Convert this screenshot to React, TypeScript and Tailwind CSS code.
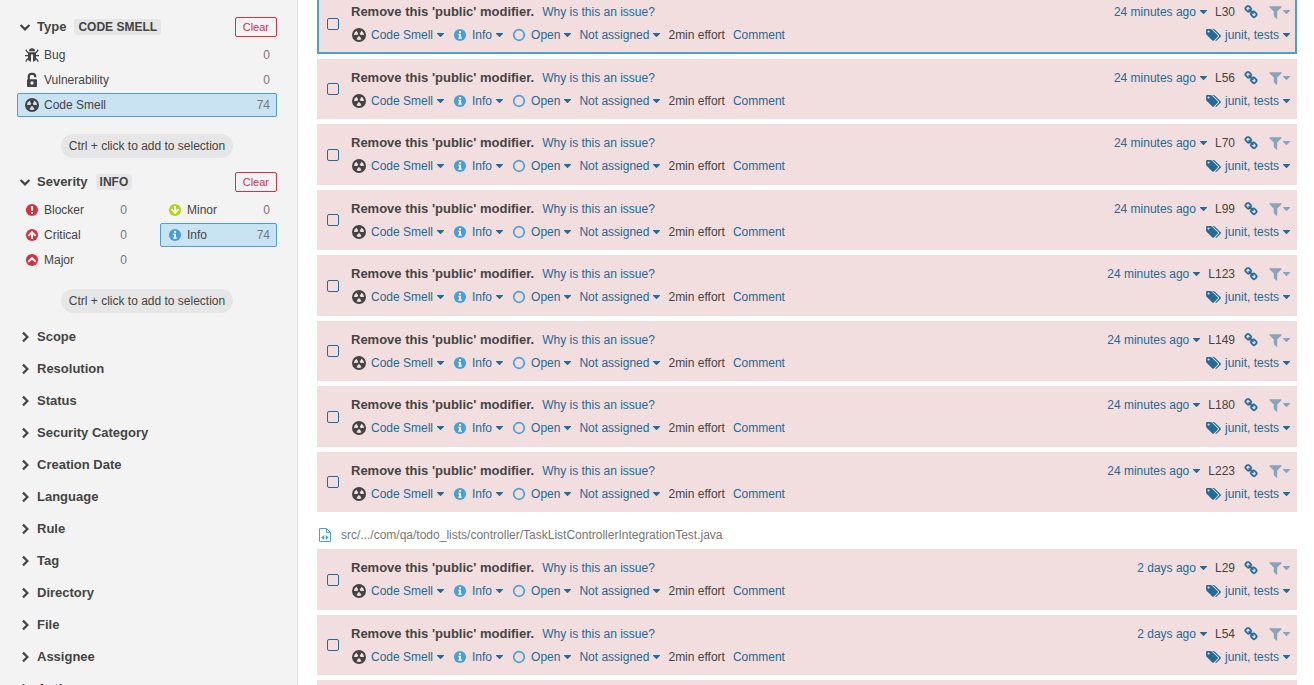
import React from "react";

type IconProps = { className?: string };

function CaretDown({ className = "" }: IconProps) {
  return (
    <svg viewBox="0 0 7 4" className={`h-1 w-[7px] shrink-0 ${className}`} fill="currentColor" aria-hidden="true">
      <path d="M.2 0h6.600c.2 0 .3.500.1.800L4 3.800a.7.700 0 0 1-1 0L.1.800C-.1.500 0 0 .2 0z" />
    </svg>
  );
}

function Chevron({ open }: { open: boolean }) {
  return (
    <svg viewBox="0 0 16 16" className="size-4 shrink-0" fill="none" stroke="#444" strokeWidth="2.2" aria-hidden="true">
      <path d={open ? "M3.6 6l4.4 4.4L12.4 6" : "M6 3.6L10.4 8 6 12.4"} />
    </svg>
  );
}

function BugIcon() {
  return (
    <svg viewBox="0 0 16 16" className="size-4 shrink-0" aria-hidden="true">
      <path fill="#444" d="M5 4.200a3 3 0 0 1 6 0zM4 5.200h8v6.300a4 3.500 0 0 1-3 3.300V7.500H7v7.300a4 3.500 0 0 1-3-3.300z" />
      <path fill="none" stroke="#444" strokeWidth="1.300" d="M4.500 6L2.300 3.800V2.500M11.500 6l2.200-2.200V2.500M1 8.700h3.500M11.500 8.700H15M4.500 11.300L2.300 13.200v1.500M11.500 11.300l2.200 1.900v1.500" />
    </svg>
  );
}

function LockIcon() {
  return (
    <svg viewBox="0 0 16 16" className="size-4 shrink-0" aria-hidden="true">
      <path d="M4.8 8V4.4A2.6 2.6 0 0 1 7.4 1.9h1.2a2.6 2.6 0 0 1 2.6 2.5v.9" fill="none" stroke="#444" strokeWidth="2.200" />
      <path fillRule="evenodd" fill="#444" d="M3.8 7.2h8.4c.5 0 .8.3.8.8v6.2c0 .5-.3.8-.8.8H3.800c-.5 0-.8-.3-.8-.8V8c0-.5.3-.8.8-.8zM8 9.300a1.700 1.700 0 1 0 0 3.400 1.700 1.700 0 0 0 0-3.400z" />
    </svg>
  );
}

function CodeSmellIcon() {
  return (
    <svg viewBox="0 0 16 16" className="size-4 shrink-0" aria-hidden="true">
      <path
        fill="#444"
        fillRule="evenodd"
        d="M8 1a7 7 0 1 0 0 14A7 7 0 0 0 8 1zM10.500 3.670A5 5 0 0 1 13 8H9.500A1.500 1.500 0 0 0 8.750 6.700zM5.500 3.670A5 5 0 0 0 3 8H6.500A1.500 1.500 0 0 1 7.250 6.700zM8.750 9.300A1.500 1.500 0 0 1 7.250 9.300L5.500 12.330A5 5 0 0 0 10.500 12.330z"
      />
    </svg>
  );
}

type Severity = "blocker" | "critical" | "major" | "minor" | "info";

function SeverityIcon({ kind }: { kind: Severity }) {
  const fill = kind === "info" ? "#4b9fd5" : kind === "minor" ? "#b0d513" : "#d4333f";
  return (
    <svg viewBox="0 0 16 16" className="size-4 shrink-0" aria-hidden="true">
      <circle cx="8" cy="8" r="6.1" fill={fill} />
      {kind === "blocker" && <path fill="#fff" d="M6.900 4h2.200l-.3 5H7.200zM7 10h2v1.900H7z" />}
      {kind === "critical" && <path fill="none" stroke="#fff" strokeWidth="1.900" d="M8 12V5.500M4.400 8.800L8 5.200l3.600 3.600" />}
      {kind === "major" && <path fill="none" stroke="#fff" strokeWidth="2" d="M4.200 9.900L8 6.200l3.800 3.700" />}
      {kind === "minor" && <path fill="none" stroke="#fff" strokeWidth="1.900" d="M8 4v6.500M4.400 7.200L8 10.800l3.600-3.600" />}
      {kind === "info" && <path fill="#f2f6f9" d="M7 4h2v1.700H7zM6.400 6.800H9v3.600h.8v1.400H6.300v-1.400H7V8.100h-.6z" />}
    </svg>
  );
}

function OpenIcon() {
  return (
    <svg viewBox="0 0 16 16" className="size-4 shrink-0" aria-hidden="true">
      <circle cx="8" cy="8" r="5.300" fill="none" stroke="#4b9fd5" strokeWidth="1.700" />
    </svg>
  );
}

function LinkIcon() {
  return (
    <svg
      viewBox="0 0 1792 1792"
      className="size-[14px] shrink-0"
      fill="#236a97"
      stroke="#236a97"
      strokeWidth="50"
      aria-hidden="true"
    >
      <path d="M1520 1216q0-40-28-68l-208-208q-28-28-68-28-42 0-72 32 3 3 19 18.500t21.500 21.500 15 19 13 25.500 3.500 27.500q0 40-28 68t-68 28q-15 0-27.500-3.500t-25.500-13-19-15-21.500-21.500-18.500-19q-33 31-33 73 0 40 28 68l206 207q27 27 68 27 40 0 68-26l147-146q28-28 28-67zm-703-705q0-40-28-68l-206-207q-28-28-68-28-39 0-68 27l-147 146q-28 28-28 67 0 40 28 68l208 208q27 27 68 27 42 0 72-31-3-3-19-18.500t-21.500-21.500-15-19-13-25.500-3.500-27.500q0-40 28-68t68-28q15 0 27.500 3.500t25.500 13 19 15 21.500 21.500 18.500 19q33-31 33-73zm895 705q0 120-85 203l-147 146q-83 83-203 83-121 0-204-85l-206-207q-83-83-83-203 0-123 88-209l-88-88q-86 88-208 88-120 0-204-84l-208-208q-84-84-84-204t85-203l147-146q83-83 203-83 121 0 204 85l206 207q83 83 83 203 0 123-88 209l88 88q86-88 208-88 120 0 204 84l208 208q84 84 84 204z" />
    </svg>
  );
}

function FilterIcon() {
  return (
    <svg viewBox="160 224 1472 1472" className="size-[13px] shrink-0" fill="currentColor" aria-hidden="true">
      <path d="M1595 295q17 41-14 70l-493 493v742q0 42-39 59-13 5-25 5-27 0-45-19l-256-256q-19-19-19-45v-486l-493-493q-31-29-14-70 17-39 59-39h1280q42 0 59 39z" />
    </svg>
  );
}

function TagsIcon() {
  return (
    <svg viewBox="0 128 1900 1536" className="h-3 w-[15px] shrink-0" fill="#236a97" aria-hidden="true">
      <path d="M448 448q0-53-37.500-90.500t-90.500-37.500-90.500 37.500-37.500 90.500 37.500 90.500 90.500 37.500 90.500-37.500 37.500-90.500zm1067 576q0 53-37 90l-491 492q-39 37-91 37-53 0-90-37l-715-716q-38-37-64.500-101t-26.500-117v-416q0-52 38-90t90-38h416q53 0 117 26.500t102 64.500l715 714q37 39 37 91zm384 0q0 53-37 90l-491 492q-39 37-91 37-36 0-59-14t-53-45l470-470q37-37 37-90 0-52-37-91l-715-714q-38-38-102-64.500t-117-26.500h224q53 0 117 26.500t102 64.500l715 714q37 39 37 91z" />
    </svg>
  );
}

function TestFileIcon() {
  return (
    <svg viewBox="0 0 16 16" className="size-4 shrink-0" aria-hidden="true">
      <path fill="none" stroke="#4b9fd5" d="M2.500 1.500h7l4 4v9h-11zM9.500 1.500v4h4" />
      <path fill="#4b9fd5" d="M7.300 8v5L4.200 10.500zM8.700 8v5l3.100-2.500z" />
    </svg>
  );
}

type FacetItem = { label: string; count: number; icon: React.ReactNode; active?: boolean };

function FacetRow({ label, count, icon, active = false }: FacetItem) {
  return (
    <button
      type="button"
      aria-pressed={active}
      className={`flex h-6 w-full items-center rounded-xs border px-1.5 text-left text-xs ${
        active ? "border-[#4b9fd5] bg-[#cae3f2]" : "border-transparent"
      }`}
    >
      {icon}
      <span className="ml-1 flex-1 text-[#444]">{label}</span>
      <span className="text-[#777]">{count}</span>
    </button>
  );
}

function FacetHeader({ title, value }: { title: string; value: string }) {
  return (
    <div className="flex h-5 items-center">
      <button type="button" aria-expanded="true" className="flex items-center gap-1 text-[13px] font-bold">
        <Chevron open />
        {title}
      </button>
      <span className="ml-2 h-4 rounded-[3px] bg-[#e6e6e6] px-1 text-xs leading-4 font-bold">{value}</span>
      <button
        type="button"
        className="ml-auto flex h-5 items-center rounded-xs border border-[#d4333f] px-[7px] text-[11px] font-medium text-[#d4333f]"
      >
        Clear
      </button>
    </div>
  );
}

function SelectionHint() {
  return (
    <div className="mt-[17px] flex justify-center">
      <span className="h-6 rounded-full bg-[#e6e6e6] px-2 text-xs leading-6">Ctrl + click to add to selection</span>
    </div>
  );
}

const types: FacetItem[] = [
  { label: "Bug", count: 0, icon: <BugIcon /> },
  { label: "Vulnerability", count: 0, icon: <LockIcon /> },
  { label: "Code Smell", count: 74, icon: <CodeSmellIcon />, active: true },
];

const severitiesLeft: FacetItem[] = [
  { label: "Blocker", count: 0, icon: <SeverityIcon kind="blocker" /> },
  { label: "Critical", count: 0, icon: <SeverityIcon kind="critical" /> },
  { label: "Major", count: 0, icon: <SeverityIcon kind="major" /> },
];

const severitiesRight: FacetItem[] = [
  { label: "Minor", count: 0, icon: <SeverityIcon kind="minor" /> },
  { label: "Info", count: 74, icon: <SeverityIcon kind="info" />, active: true },
];

const closedFacets = [
  "Scope",
  "Resolution",
  "Status",
  "Security Category",
  "Creation Date",
  "Language",
  "Rule",
  "Tag",
  "Directory",
  "File",
  "Assignee",
  "Author",
];

function Sidebar() {
  return (
    <aside className="w-[298px] shrink-0 overflow-hidden border-r border-[#e6e6e6] bg-[#f3f3f3] pt-[17px] pr-5 pl-[17px] text-[#444]">
      <section>
        <FacetHeader title="Type" value="CODE SMELL" />
        <div className="mt-1.5 flex flex-col gap-px">
          {types.map((item) => (
            <FacetRow key={item.label} {...item} />
          ))}
        </div>
        <SelectionHint />
      </section>
      <section className="mt-3.5">
        <FacetHeader title="Severity" value="INFO" />
        <div className="mt-1.5 grid grid-cols-2 gap-[26px]">
          {[severitiesLeft, severitiesRight].map((column, index) => (
            <div key={index} className="flex flex-col gap-px">
              {column.map((item) => (
                <FacetRow key={item.label} {...item} />
              ))}
            </div>
          ))}
        </div>
        <SelectionHint />
      </section>
      <nav className="mt-2 flex flex-col" aria-label="Filters">
        {closedFacets.map((name) => (
          <button key={name} type="button" aria-expanded="false" className="flex h-8 items-center gap-1 text-[13px] font-bold">
            <Chevron open={false} />
            {name}
          </button>
        ))}
      </nav>
    </aside>
  );
}

type Issue = { line: number; age: string; selected?: boolean };

function MenuButton({ icon, label }: { icon?: React.ReactNode; label: string }) {
  return (
    <button type="button" className="flex items-center gap-1 text-[#236a97]">
      {icon}
      <span>{label}</span>
      <CaretDown />
    </button>
  );
}

function IssueRow({ line, age, selected = false }: Issue) {
  return (
    <li
      className={`flex border-2 bg-[#f2dede] text-xs leading-4 odd:h-[61px] even:h-[60px] ${
        selected ? "border-[#4b9fd5]" : "border-[#f2dede]"
      }`}
    >
      <div className="flex w-8 shrink-0 items-center pl-2">
        <input
          type="checkbox"
          aria-label={`Select issue on line ${line}`}
          className="size-3 appearance-none rounded-xs border border-[#236a97]"
        />
      </div>
      <div className="flex min-w-0 flex-1 flex-col gap-[7px] pt-[9px] pr-[5px]">
        <div className="flex items-center">
          <span className="text-[13px] leading-4 font-bold text-[#444]">Remove this 'public' modifier.</span>
          <a href="#rule" className="ml-2 text-[#236a97]">
            Why is this an issue?
          </a>
          <div className="ml-auto flex items-center">
            <MenuButton label={age} />
            <span className="ml-2 text-[#444]">L{line}</span>
            <a href="#permalink" aria-label="Permalink" className="ml-[9px]">
              <LinkIcon />
            </a>
            <button type="button" aria-label="Filter similar issues" className="ml-[11px] flex items-center gap-px text-[#236a97] opacity-50">
              <FilterIcon />
              <CaretDown />
            </button>
          </div>
        </div>
        <div className="flex items-center">
          <div className="flex items-center gap-2">
            <MenuButton icon={<CodeSmellIcon />} label="Code Smell" />
            <MenuButton icon={<SeverityIcon kind="info" />} label="Info" />
            <MenuButton icon={<OpenIcon />} label="Open" />
            <MenuButton label="Not assigned" />
            <span className="text-[#444]">2min effort</span>
            <button type="button" className="text-[#236a97]">
              Comment
            </button>
          </div>
          <div className="ml-auto">
            <MenuButton icon={<TagsIcon />} label="junit, tests" />
          </div>
        </div>
      </div>
    </li>
  );
}

const firstFile: Issue[] = [
  { line: 30, age: "24 minutes ago", selected: true },
  { line: 56, age: "24 minutes ago" },
  { line: 70, age: "24 minutes ago" },
  { line: 99, age: "24 minutes ago" },
  { line: 123, age: "24 minutes ago" },
  { line: 149, age: "24 minutes ago" },
  { line: 180, age: "24 minutes ago" },
  { line: 223, age: "24 minutes ago" },
];

const secondFile: Issue[] = [
  { line: 29, age: "2 days ago" },
  { line: 54, age: "2 days ago" },
  { line: 79, age: "2 days ago" },
];

function IssueList({ issues }: { issues: Issue[] }) {
  return (
    <ul className="flex flex-col gap-[5px]">
      {issues.map((issue) => (
        <IssueRow key={issue.line} {...issue} />
      ))}
    </ul>
  );
}

export default function App() {
  return (
    <div className="flex h-screen overflow-hidden bg-white font-['Liberation_Sans',Arial,sans-serif]">
      <Sidebar />
      <main className="min-w-0 flex-1 overflow-hidden pr-[17px] pl-[19px]">
        <div className="-mt-[7px]">
          <IssueList issues={firstFile} />
          <h2 className="flex items-center gap-2 pt-[15px] pb-1.5 text-xs leading-4 text-[#777]">
            <TestFileIcon />
            src/.../com/qa/todo_lists/controller/TaskListControllerIntegrationTest.java
          </h2>
          <IssueList issues={secondFile} />
        </div>
      </main>
    </div>
  );
}
